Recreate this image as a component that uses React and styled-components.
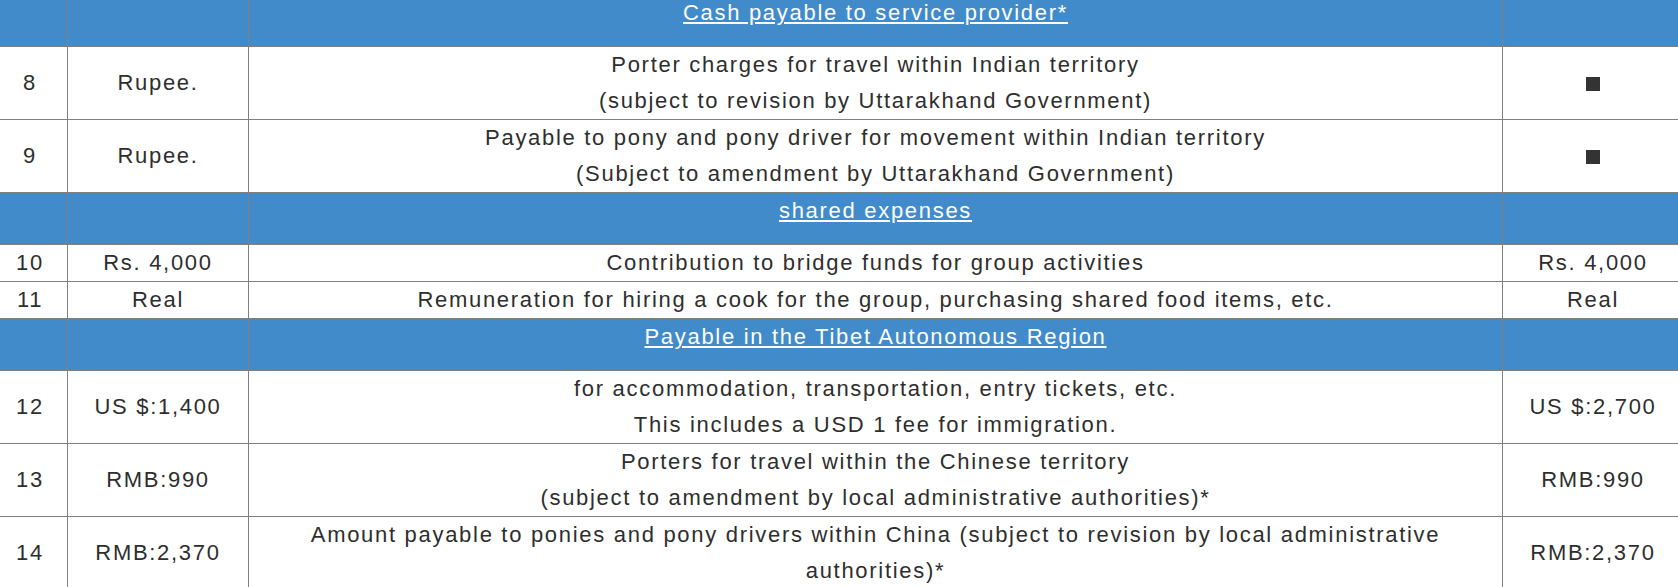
import React from "react";
import styled, { createGlobalStyle } from "styled-components";

const GlobalStyle = createGlobalStyle`
  html, body {
    margin: 0;
    padding: 0;
    background: #ffffff;
    overflow: hidden;
  }
  body {
    font-family: "Liberation Sans", Arial, Helvetica, sans-serif;
  }
`;

const Viewport = styled.div`
  width: 1678px;
  height: 587px;
  overflow: hidden;
`;

const Table = styled.table`
  border-collapse: collapse;
  table-layout: fixed;
  width: 1691px;
  margin: -6px 0 0 -8px;
  font-size: 22px;
  line-height: 36px;
  letter-spacing: 1.7px;
  color: #2e2e2e;
`;

const Col = styled.col`
  width: ${(p) => p.$w}px;
`;

const Cell = styled.td`
  border: 1px solid #808080;
  padding: 0 6px;
  text-align: center;
  vertical-align: middle;
`;

const SectionCell = styled(Cell)`
  background: #428bca;
  color: #ffffff;
  padding-bottom: 15px;
  vertical-align: top;
`;

const SectionTitle = styled.a`
  color: #ffffff;
  text-decoration: underline;
  text-underline-offset: 2px;
  cursor: pointer;
`;

const Square = styled.span`
  display: inline-block;
  width: 14px;
  height: 14px;
  background: #333333;
  vertical-align: -1px;
`;

const rows = [
  { type: "section", title: "Cash payable to service provider*" },
  {
    no: "8",
    a: "Rupee.",
    desc: ["Porter charges for travel within Indian territory", "(subject to revision by Uttarakhand Government)"],
    b: null,
  },
  {
    no: "9",
    a: "Rupee.",
    desc: [
      "Payable to pony and pony driver for movement within Indian territory",
      "(Subject to amendment by Uttarakhand Government)",
    ],
    b: null,
  },
  { type: "section", title: "shared expenses" },
  { no: "10", a: "Rs. 4,000", desc: ["Contribution to bridge funds for group activities"], b: "Rs. 4,000" },
  {
    no: "11",
    a: "Real",
    desc: ["Remuneration for hiring a cook for the group, purchasing shared food items, etc."],
    b: "Real",
  },
  { type: "section", title: "Payable in the Tibet Autonomous Region" },
  {
    no: "12",
    a: "US $:1,400",
    desc: ["for accommodation, transportation, entry tickets, etc.", "This includes a USD 1 fee for immigration."],
    b: "US $:2,700",
  },
  {
    no: "13",
    a: "RMB:990",
    desc: [
      "Porters for travel within the Chinese territory",
      "(subject to amendment by local administrative authorities)*",
    ],
    b: "RMB:990",
  },
  {
    no: "14",
    a: "RMB:2,370",
    desc: [
      "Amount payable to ponies and pony drivers within China (subject to revision by local administrative authorities)*",
    ],
    b: "RMB:2,370",
  },
];

function Desc({ lines }) {
  return lines.map((l, i) => (
    <React.Fragment key={i}>
      {i > 0 && <br />}
      {l}
    </React.Fragment>
  ));
}

export default function App() {
  return (
    <>
      <GlobalStyle />
      <Viewport>
        <Table>
          <colgroup>
            <Col $w={75} />
            <Col $w={181} />
            <Col $w={1254} />
            <Col $w={181} />
          </colgroup>
          <tbody>
            {rows.map((r, i) =>
              r.type === "section" ? (
                <tr key={i}>
                  <SectionCell />
                  <SectionCell />
                  <SectionCell>
                    <SectionTitle>{r.title}</SectionTitle>
                  </SectionCell>
                  <SectionCell />
                </tr>
              ) : (
                <tr key={i}>
                  <Cell>{r.no}</Cell>
                  <Cell>{r.a}</Cell>
                  <Cell>
                    <Desc lines={r.desc} />
                  </Cell>
                  <Cell>{r.b === null ? <Square aria-label="■" /> : r.b}</Cell>
                </tr>
              )
            )}
          </tbody>
        </Table>
      </Viewport>
    </>
  );
}
